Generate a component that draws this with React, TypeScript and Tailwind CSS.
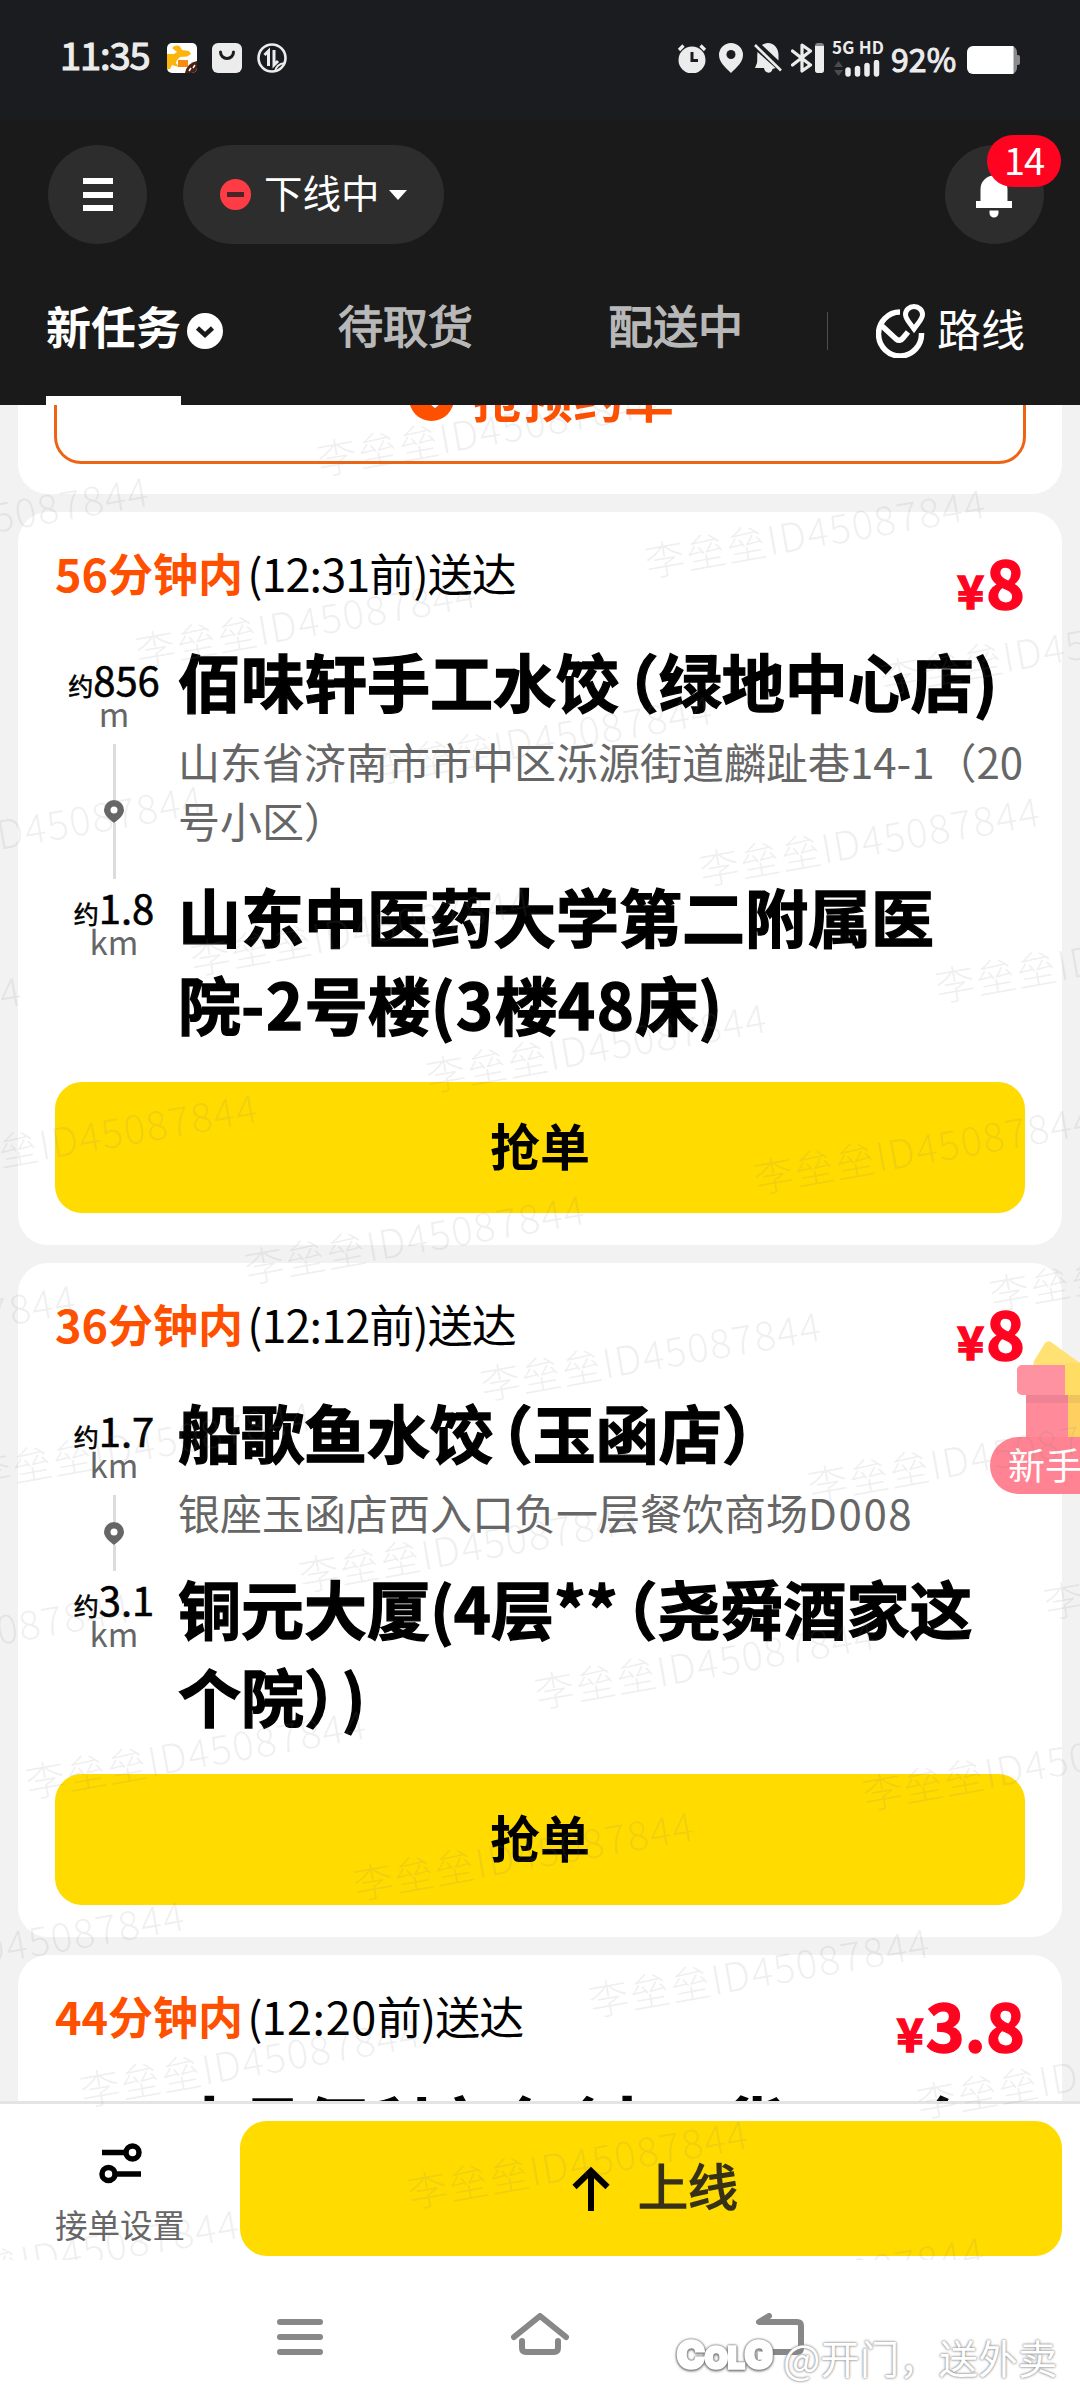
import type { ReactNode } from 'react';

type Stop = { distance: string; unit: string };

interface Task {
  minutes: string;
  deadline: ReactNode;
  price: string;
  from: Stop;
  to: Stop;
  shop: ReactNode;
  address: ReactNode;
  target: ReactNode;
}

// full-width brackets set tight against the neighbouring glyphs
const Open = () => <span className="-ml-[0.37em]">（</span>;
const Close = () => <span className="-mr-[0.4em]">）</span>;
const Wide = ({ children }: { children: ReactNode }) => <span className="tracking-[1.6px]">{children}</span>;

const tasks: Task[] = [
  {
    minutes: '56',
    deadline: '12:31',
    price: '8',
    from: { distance: '856', unit: 'm' },
    to: { distance: '1.8', unit: 'km' },
    shop: <>佰味轩手工水饺<Open />绿地中心店)</>,
    address: <>山东省济南市市中区泺源街道麟趾巷14-1（20<br />号小区）</>,
    target: <>山东中医药大学第二附属医<br />院<Wide>-2</Wide>号楼<Wide>(3</Wide>楼<Wide>48</Wide>床)</>,
  },
  {
    minutes: '36',
    deadline: '12:12',
    price: '8',
    from: { distance: '1.7', unit: 'km' },
    to: { distance: '3.1', unit: 'km' },
    shop: <>船歌鱼水饺<Open />玉函店<Close /></>,
    address: <>银座玉函店西入口负一层餐饮商场<Wide>D008</Wide></>,
    target: <>铜元大厦(4层**<Open />尧舜酒家这<br />个院<Close />)</>,
  },
  {
    minutes: '44',
    deadline: <span className="tracking-[0.6px]">12:20</span>,
    price: '3.8',
    from: { distance: '1.2', unit: 'km' },
    to: { distance: '2.4', unit: 'km' },
    shop: <>大昌便利市仓<Open />中二货一三仓</>,
    address: '',
    target: '',
  },
];

function StatusBar() {
  return (
    <div className="flex h-[120px] items-start bg-[#1b1c20] pl-[60px] pr-[59px] pt-[41px] text-[#ececec]">
      <span className="-mt-[3px] w-[107px] text-[38px] leading-[32px] tracking-[-1.1px] [-webkit-text-stroke:1.2px]">11:35</span>
      <div className="flex gap-[15px] pt-[2px]">
        <svg width="30" height="30" viewBox="0 0 30 30">
          <rect width="30" height="30" rx="5" fill="#fff" />
          <path d="M0 11 H7 L10 9 L5 5 Q9 1 13 3.500 L15 7 L22 8 L24 11 L20 13.500 L13 14 L10 17 L9 20 L12 24 L5 22 L3 26 L0 26Z" fill="#fbb50c" />
          <rect x="11" y="17" width="10" height="7" fill="#f98a10" />
          <path d="M30 18 V25 a5 5 0 0 1 -5 5 H18 Q20 20 30 18Z" fill="#4a2014" />
          <path d="M22 28 l2 -3 M26 25 l2 -3" stroke="#fff" strokeWidth="1.4" />
        </svg>
        <svg width="30" height="30" viewBox="0 0 30 30">
          <rect width="30" height="30" rx="6" fill="#ececec" />
          <path d="M8.500 9 a6.500 6.500 0 0 0 13 0" fill="none" stroke="#1b1c20" strokeWidth="3" strokeLinecap="round" />
        </svg>
        <svg width="30" height="30" viewBox="0 0 30 30" fill="none" stroke="#ececec">
          <circle cx="15" cy="15" r="13.500" strokeWidth="2.600" />
          <path d="M11.500 23 V8 L7.500 12 M17 7 V22 L21 18" strokeWidth="3" />
          <path d="M18 29 Q19 21 28 20" strokeWidth="2" />
        </svg>
      </div>
      <div className="ml-auto flex items-start pt-[2px]">
        <svg width="30" height="30" viewBox="0 0 30 30" className="mr-[12px]">
          <circle cx="15" cy="17" r="13.500" fill="#ececec" />
          <path d="M2 7 L6.500 2.500 M28 7 L23.500 2.500" stroke="#ececec" strokeWidth="3.200" />
          <path d="M15 9 V17.500 H21" fill="none" stroke="#1b1c20" strokeWidth="3" />
        </svg>
        <svg width="24" height="30" viewBox="0 0 24 30" className="mr-[11px]">
          <path d="M12 0 a12 12 0 0 1 12 12 c0 7 -6 12 -12 18 c-6 -6 -12 -11 -12 -18 a12 12 0 0 1 12 -12Z" fill="#ececec" />
          <circle cx="12" cy="11.500" r="4.500" fill="#1b1c20" />
        </svg>
        <svg width="28" height="30" viewBox="0 0 28 30" className="mr-[9px]">
          <path d="M14 0 c-2.500 0 -4.500 1 -6 2 L24.500 17.500 V12 C24.500 5 20 0 14 0Z M3.500 9 C3 12 3.500 17 3 20 L1 25 H10 C10.500 31 18 31 18.500 26 L21.500 25Z" fill="#ececec" />
          <path d="M1 2 L27 27.500" stroke="#ececec" strokeWidth="2.600" />
        </svg>
        <svg width="33" height="30" viewBox="0 0 33 30" className="mr-[8px]">
          <path d="M1.500 8 L19.500 22 L11 28 V2 L19.500 8 L1.500 22" fill="none" stroke="#ececec" strokeWidth="3.200" strokeLinejoin="round" strokeLinecap="round" />
          <rect x="24" y="0" width="9" height="30" rx="3" fill="#85868a" />
          <path d="M24 3 h9 v24 a3 3 0 0 1 -3 3 h-3 a3 3 0 0 1 -3 -3Z" fill="#ececec" />
        </svg>
        <div className="-mt-[4px] mr-[10px] w-[49px]">
          <div className="whitespace-nowrap text-[17px] font-bold leading-[16px] tracking-[0.2px]">5G HD</div>
          <svg width="49" height="17" viewBox="0 0 49 17" className="mt-[5px]">
            <path d="M2 7 L6.500 1 L11 7Z M2 10 L6.500 16 L11 10Z" fill="#4a4b4e" />
            <path d="M16 10 V14 M25.500 8.500 V14 M35 5.500 V14 M44.500 2.500 V14" stroke="#ececec" strokeWidth="5.500" strokeLinecap="round" />
          </svg>
        </div>
        <span className="mr-[9px] w-[66px] whitespace-nowrap pt-[1px] text-[32px] leading-[28px] tracking-[0.1px] [-webkit-text-stroke:1px]">92%</span>
        <svg width="55" height="28" viewBox="0 0 55 28" className="mt-[3px]">
          <path d="M7 0 H45 a6 6 0 0 1 6 6 V9 h1 a2 2 0 0 1 2 2 v6 a2 2 0 0 1 -2 2 h-1 V22 a6 6 0 0 1 -6 6 H7Z" fill="#8b8b8d" />
          <path d="M7 0 H47.500 V28 H7 a6 6 0 0 1 -6 -6 V6 a6 6 0 0 1 6 -6Z" fill="#fff" />
        </svg>
      </div>
    </div>
  );
}

function TopBar() {
  return (
    <div className="flex items-center bg-[#1a1a1a] pl-[48px] pr-[36px] pt-[25px]">
      <button className="flex size-[99px] flex-col items-center justify-center gap-[7.5px] rounded-full bg-[#2d2d2d]">
        <i className="h-[6px] w-[30px] bg-white" />
        <i className="h-[6px] w-[30px] bg-white" />
        <i className="h-[6px] w-[30px] bg-white" />
      </button>
      <button className="ml-[36px] flex h-[99px] w-[261px] items-center rounded-full bg-[#2d2d2d] pl-[37px] text-white">
        <span className="flex size-[31px] items-center justify-center rounded-full bg-[#ff3c46]">
          <i className="h-[5px] w-[17px] bg-[#4a2426]" />
        </span>
        <span className="-mt-[5px] ml-[13px] text-[38.5px]">下线中</span>
        <svg width="18" height="10" viewBox="0 0 18 10" className="ml-[9px]">
          <path d="M0 0 H18 L9 10Z" fill="#fff" />
        </svg>
      </button>
      <button className="relative ml-auto size-[99px] rounded-full bg-[#2d2d2d]">
        <svg width="36" height="44" viewBox="0 0 36 44" className="absolute left-[31px] top-[29px]">
          <path d="M4.500 27 V15 a13.500 13.500 0 0 1 27 0 V27 H36 V34 H0 V27Z M13.500 36.500 H22.500 V39 a4.500 4.500 0 0 1 -9 0Z" fill="#fff" />
        </svg>
        <span className="absolute -right-[17px] -top-[10px] flex h-[52px] w-[74px] items-center justify-center rounded-full bg-[#ff0420] pb-[5px] text-[38px] tracking-[-1px] text-white">14</span>
      </button>
    </div>
  );
}

function Tabs() {
  return (
    <div className="flex h-[161px] items-start bg-[#1a1a1a] pl-[46px] text-[45px] text-[#b8b8b8]">
      <div className="flex h-full w-[180px] flex-col justify-between pt-[57px]">
        <div className="flex items-center whitespace-nowrap leading-[45px] text-white">
          <span className="font-bold">新任务</span>
          <svg width="36" height="36" viewBox="0 0 36 36" className="ml-[6px] mt-[12px]">
            <circle cx="18" cy="18" r="18" fill="#fff" />
            <path d="M10.500 15 L18 22 L25.500 15" fill="none" stroke="#1a1a1a" strokeWidth="4.500" />
          </svg>
        </div>
        <i className="h-[9px] w-[135px] bg-white" />
      </div>
      <span className="ml-[112px] pt-[58px] leading-[45px] [-webkit-text-stroke:1.4px]">待取货</span>
      <span className="ml-[135px] pt-[58px] leading-[45px] [-webkit-text-stroke:1.4px]">配送中</span>
      <i className="ml-[84px] mt-[68px] h-[38px] w-px bg-[#4d4d4d]" />
      <div className="ml-[48px] mt-[60px] flex text-white">
        <svg width="50" height="54" viewBox="0 0 50 54" fill="none" stroke="#fff">
          <path d="M24 8 A21.500 22 0 1 0 45.500 29" strokeWidth="5.500" />
          <path d="M6 22 L20 35 Q24 38 27 34 L32 28" strokeWidth="5.500" />
          <path d="M38 25 C33 18 29.500 15 29.500 10.500 a8.500 8 0 0 1 17 0 C46.500 15 43 18 38 25Z" strokeWidth="5" />
        </svg>
        <span className="ml-[11px] pt-[2px] text-[44px] leading-[45px]">路线</span>
      </div>
    </div>
  );
}

function Distance({ stop }: { stop: Stop }) {
  return (
    <div className="pl-[2px] text-center">
      <div className="h-[44px] whitespace-nowrap text-[40px] leading-[44px] [-webkit-text-stroke:0.6px]">
        <span className="text-[25px] leading-none">约</span>
        {stop.distance}
      </div>
      <div className="-mt-[3px] text-[33px] leading-[30px] text-[#666]">{stop.unit}</div>
    </div>
  );
}

function TaskCard({ task }: { task: Task }) {
  return (
    <section className="shrink-0 rounded-[30px] bg-white px-[37px] pb-[32px] pt-[34px]">
      <div className="flex h-[60px] justify-between">
        <h2 className="-mt-[3px] text-[45px] leading-[60px]">
          <b className="text-[#ff5000]">{task.minutes}分钟内</b>
          <span className="ml-[4px] tracking-[-0.9px]">({task.deadline}前)送达</span>
        </h2>
        <div className="mt-[4px] text-[66px] font-bold leading-[60px] text-[#ff0420] [-webkit-text-stroke:1.5px]">
          <span className="mr-[2px] text-[46px] leading-none">¥</span>
          {task.price}
        </div>
      </div>
      <div className="mt-[34px] grid grid-cols-[116px_1fr] gap-x-[7px]">
        <div className="flex flex-col pt-[17px]">
          <Distance stop={task.from} />
          <div className="-mb-1 mt-[16px] flex flex-1 flex-col items-center pl-[2px]">
            <i className="w-[3px] flex-1 bg-[#dcdcdc]" />
            <svg width="20" height="23" viewBox="0 0 20 23">
              <path d="M10 0 a10 10 0 0 1 10 10 c0 5 -5 9 -10 13 c-5 -4 -10 -8 -10 -13 a10 10 0 0 1 10 -10Z" fill="#666" />
              <circle cx="10" cy="10" r="3.500" fill="#fff" />
            </svg>
            <i className="w-[3px] flex-1 bg-[#dcdcdc]" />
          </div>
        </div>
        <div>
          <h3 className="-mt-[4px] whitespace-nowrap text-[63px] font-bold leading-[88px] [-webkit-text-stroke:1.3px] [text-spacing-trim:space-all]">{task.shop}</h3>
          <p className="mb-[26px] mt-[7px] whitespace-nowrap text-[42px] leading-[59px] text-[#666] [text-spacing-trim:space-all]">{task.address}</p>
        </div>
        <div className="pt-[10px]">
          <Distance stop={task.to} />
        </div>
        <h3 className="-mt-[4px] mb-[4px] whitespace-nowrap text-[63px] font-bold leading-[88px] [-webkit-text-stroke:1.3px] [text-spacing-trim:space-all]">{task.target}</h3>
      </div>
      <button className="mt-[31px] block h-[131px] w-full rounded-[27px] bg-[#ffdb00] pb-[6px] text-[50px] font-bold">抢单</button>
    </section>
  );
}

function ReservedCard() {
  return (
    <section className="shrink-0 rounded-b-[30px] bg-white px-[36px] pb-[30px]">
      <div className="flex h-[59px] items-end justify-center overflow-hidden rounded-b-[27px] border-x-[3px] border-b-[3px] border-[#ee6414] pb-[40px] pl-[4px] text-[50px] font-bold leading-[50px] tracking-[0.6px] text-[#ff5000]">
        <svg width="45" height="45" viewBox="0 0 45 45" className="mr-[18px]">
          <circle cx="22.500" cy="22.500" r="22.500" fill="#ff5000" />
          <path d="M17 21 L26 29 L38 18" fill="none" stroke="#fff" strokeWidth="5" />
        </svg>
        抢预约单
      </div>
    </section>
  );
}

function Gift() {
  return (
    <div className="absolute left-[990px] top-[936px] h-[153px] w-[90px] overflow-hidden">
      <svg width="63" height="96" viewBox="0 0 63 96" className="ml-[27px] block">
        <path d="M17 20 L28 2 Q31 -1 34 1 L63 22 V30 H20 Q15 27 17 20Z" fill="#ffe273" />
        <rect x="0" y="24" width="70" height="30" rx="5" fill="#ff92a1" />
        <rect x="9" y="54" width="54" height="42" fill="#ff8b9a" />
        <rect x="9" y="54" width="54" height="8" fill="#ef8393" />
        <rect x="48" y="22" width="15" height="32" fill="#ffdc63" />
        <rect x="51" y="54" width="12" height="42" fill="#ffd060" />
        <rect x="51" y="54" width="12" height="8" fill="#efc35e" />
      </svg>
      <div className="h-[57px] w-[160px] rounded-full bg-[#ff8392] pl-[18px] text-[37px] leading-[54px] text-white">新手</div>
    </div>
  );
}

function BottomBar() {
  return (
    <footer className="flex h-[176px] shrink-0 border-t-[3px] border-[#e4e4e4] bg-white pr-[18px] pt-[17px]">
      <div className="flex w-[240px] flex-col items-center pt-[22px]">
        <svg width="43" height="42" viewBox="0 0 43 42" fill="none" stroke="#000" strokeWidth="5.500">
          <circle cx="33.500" cy="9.500" r="6.500" />
          <circle cx="9.500" cy="31" r="6.500" />
          <path d="M3 9.500 H27 M16 31 H42" />
        </svg>
        <span className="mt-[16px] text-[32.5px] leading-[46px] text-[#666]">接单设置</span>
      </div>
      <button className="flex h-[135px] flex-1 items-center justify-center rounded-[27px] bg-[#ffdb00] pl-[8px] text-[50px] text-[#363117]">
        <svg width="38" height="46" viewBox="0 0 38 46" className="mr-[28px]">
          <path d="M2.500 21 L19 5 L35.500 21 M19 4 V45" fill="none" stroke="#000" strokeWidth="6" />
        </svg>
        <span className="-mt-[8px] [-webkit-text-stroke:1.6px]">上线</span>
      </button>
    </footer>
  );
}

function NavBar() {
  return (
    <nav className="relative flex h-[123px] items-start bg-white pt-[36px]">
      <svg width="46" height="42" viewBox="0 0 46 42" className="ml-[277px]" stroke="#888" strokeWidth="6" strokeLinecap="round">
        <path d="M3 9 H43 M3 24 H43 M3 39 H43" />
      </svg>
      <svg width="58" height="42" viewBox="0 0 58 42" className="ml-[188px]" fill="none" stroke="#888" strokeWidth="6" strokeLinecap="round" strokeLinejoin="round">
        <path d="M3 24 L29 3 L55 24 M11 28 V35 Q11 39 15 39 H43 Q47 39 47 35 V28" />
      </svg>
      <svg width="49" height="42" viewBox="0 0 49 42" className="ml-[187px]" fill="none" stroke="#888" strokeWidth="6" strokeLinecap="round" strokeLinejoin="round">
        <path d="M13 3 L3 9 H41 Q45 9 45 13 V35 Q45 39 41 39 H8" />
      </svg>
      <div className="absolute left-[677px] top-[53px] flex items-center whitespace-nowrap text-white">
        <span className="w-[106px] font-[Inter] text-[37px] font-extrabold leading-[50px] tracking-[0.5px] [-webkit-text-stroke:3.5px_white] [filter:drop-shadow(0_0_1px_#666)_drop-shadow(0_1px_1px_#777)]">
          C<span className="text-[29px]">OL</span>G
        </span>
        <span className="text-[39.500px] leading-[50px] [text-shadow:0_0_3px_#888,0_0_2px_#999]">@开门，送外卖</span>
      </div>
    </nav>
  );
}

const STEP_X = 517;
const STEP_Y = 156.5;
// staggered grid: every other row is shifted along the text direction
const marks = Array.from({ length: 17 }, (_, row) =>
  Array.from({ length: 6 }, (_, col) => ({
    left: (row % 2 ? 305 : 0) - 1248 + col * STEP_X,
    top: -227 + row * STEP_Y,
  })),
).flat();

function Watermark() {
  return (
    <div className="pointer-events-none absolute inset-x-0 bottom-[140px] top-[405px] overflow-hidden">
      <div className="absolute left-0 top-0 origin-top-left rotate-[-10deg]">
        {marks.map((m, i) => (
          <span key={i} className="absolute whitespace-nowrap text-[40px] font-light leading-[44px] tracking-[1.3px] text-[#808080]/12" style={m}>
            李垒垒ID45087844
          </span>
        ))}
      </div>
    </div>
  );
}

export default function App() {
  return (
    <div className="relative flex h-[2400px] w-[1080px] flex-col overflow-hidden bg-[#f2f2f2] font-['Noto_Sans_CJK_SC',sans-serif] text-black">
      <header>
        <StatusBar />
        <TopBar />
        <Tabs />
      </header>
      <main className="relative flex min-h-0 flex-1 flex-col gap-[18px] overflow-hidden px-[18px]">
        <ReservedCard />
        {tasks.map((t) => (
          <TaskCard key={t.minutes} task={t} />
        ))}
        <Gift />
      </main>
      <BottomBar />
      <NavBar />
      <Watermark />
    </div>
  );
}
